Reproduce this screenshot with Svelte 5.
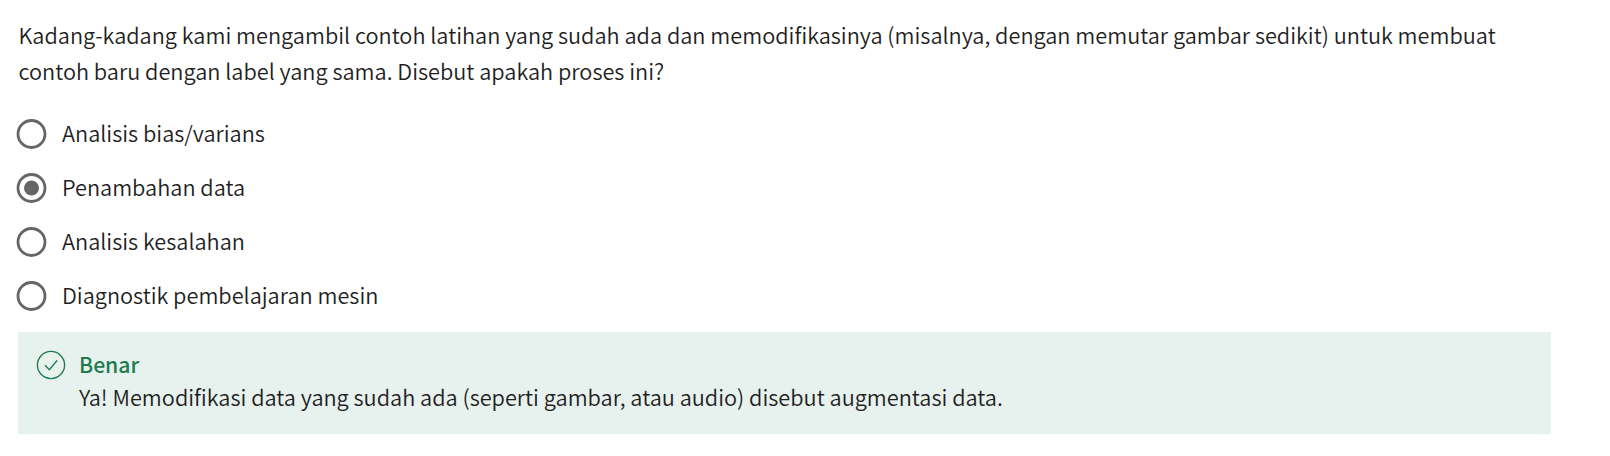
<script>
  const question = [
    'Kadang-kadang kami mengambil contoh latihan yang sudah ada dan memodifikasinya (misalnya, dengan memutar gambar sedikit) untuk membuat',
    'contoh baru dengan label yang sama. Disebut apakah proses ini?'
  ];
  const options = ['Analisis bias/varians', 'Penambahan data', 'Analisis kesalahan', 'Diagnostik pembelajaran mesin'];
  let selected = $state(1);
</script>

<main>
  <div class="question">
    {#each question as line}
      <div><span>{line}</span></div>
    {/each}
  </div>

  <div class="options" role="radiogroup">
    {#each options as option, i}
      <button class="option" role="radio" aria-checked={selected === i} onclick={() => (selected = i)}>
        <svg class="radio" viewBox="0 0 31 30">
          <circle cx="15.5" cy="15" r="13.5" fill="none" stroke="#666" stroke-width="2.8" />
          {#if selected === i}<circle cx="15.5" cy="15" r="7.5" fill="#666" />{/if}
        </svg>
        <span>{option}</span>
      </button>
    {/each}
  </div>

  <section class="feedback">
    <svg class="check" viewBox="0 0 30 30" fill="none" stroke="#1d7c50">
      <circle cx="15" cy="15" r="13.6" stroke-width="1.4" />
      <path d="M9 15.2 13.4 19.8 21.2 10.4" stroke-width="1.4" />
    </svg>
    <div class="message">
      <div class="title"><span>Benar</span></div>
      <div class="detail"><span>Ya! Memodifikasi data yang sudah ada (seperti gambar, atau audio) disebut augmentasi data.</span></div>
    </div>
  </section>
</main>

<style>
  :global(body) {
    margin: 0;
    background: #fff;
  }
  main {
    box-sizing: border-box;
    height: 456px;
    padding: 17px 59px 0 18px;
    font: 350 21.715px/36px 'Noto Sans CJK SC', sans-serif;
    color: #1f1f1f;
    white-space: nowrap;
  }
  .question {
    height: 90px;
    padding-left: 0.5px;
  }
  .options {
    height: 225px;
    margin-left: -2px;
  }
  .option {
    display: flex;
    align-items: center;
    gap: 15px;
    height: 54px;
    padding: 0;
    border: 0;
    background: none;
    font: inherit;
    color: inherit;
  }
  .option span {
    margin-top: -3px;
  }
  .radio {
    width: 31px;
    height: 30px;
    flex: none;
  }
  .feedback {
    box-sizing: border-box;
    display: flex;
    gap: 13px;
    height: 102px;
    padding: 15px 0 0 18px;
    background: #e7f1ed;
  }
  .check {
    width: 30px;
    height: 30px;
    margin-top: 3px;
    flex: none;
  }
  .message {
    line-height: 33px;
  }
  .title {
    font-size: 21.2px;
    font-weight: 500;
    color: #1d7c50;
  }
</style>
